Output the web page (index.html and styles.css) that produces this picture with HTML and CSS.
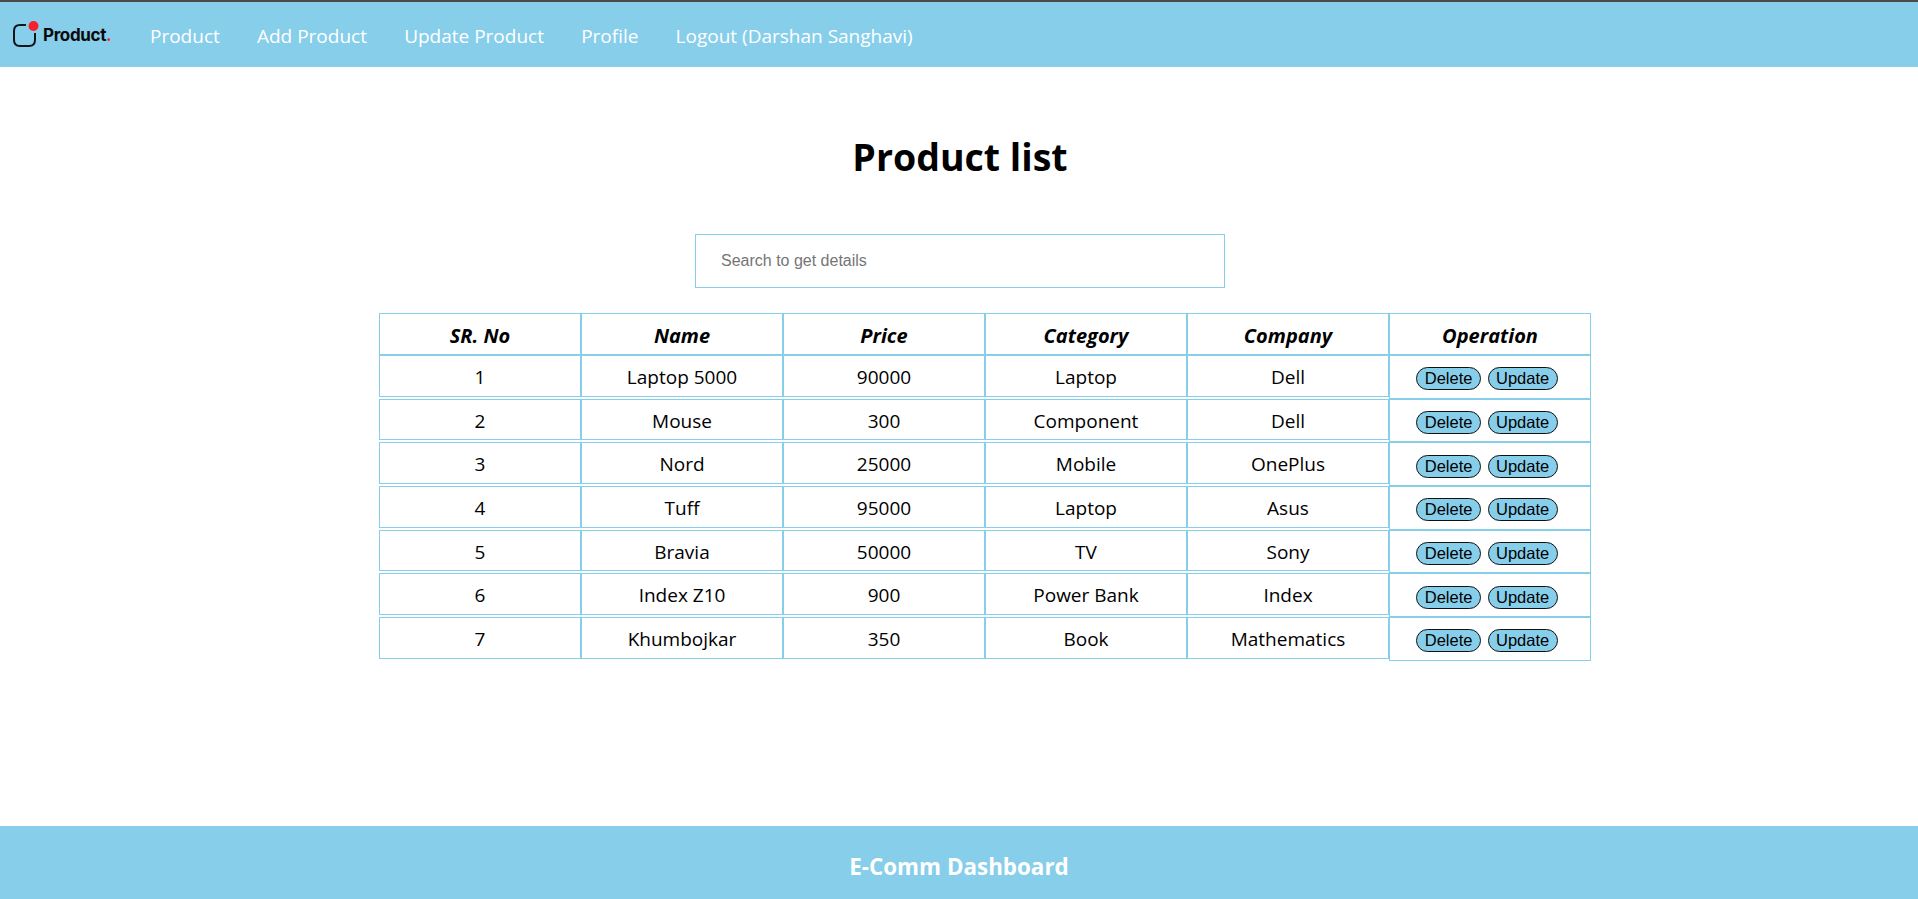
FILE: index.html
```html
<!doctype html>
<html>
	<head>
		<meta charset="utf-8">
		<title>E-Comm Dashboard</title>
		<link rel="stylesheet" href="styles.css">
	</head>
	<body>
		<nav class="navBar">
			<div class="logo">
				<svg class="logoIcon" width="32" height="34" viewBox="0 0 32 34">
					<path d="M15 7H9Q3 7 3 13V22Q3 28 9 28H18Q24 28 24 22V15" fill="none" stroke="#10151c" stroke-width="2"/>
					<circle cx="22.5" cy="8" r="5" fill="#f5222d"/>
				</svg>
				<span class="logoText">Product<span class="logoDot">.</span></span>
			</div>
			<ul class="navLinks">
				<li><a>Product</a></li>
				<li><a>Add Product</a></li>
				<li><a>Update Product</a></li>
				<li><a>Profile</a></li>
				<li><a>Logout (Darshan Sanghavi)</a></li>
			</ul>
		</nav>
		<main class="productList">
			<h1>Product list</h1>
			<input class="searchBox" type="text" placeholder="Search to get details">
			<ul class="row head">
				<li>SR. No</li><li>Name</li><li>Price</li><li>Category</li><li>Company</li><li>Operation</li>
			</ul>
			<ul class="row">
				<li>1</li><li>Laptop 5000</li><li>90000</li><li>Laptop</li><li>Dell</li>
				<li class="ops"><button>Delete</button><button>Update</button></li>
			</ul>
			<ul class="row">
				<li>2</li><li>Mouse</li><li>300</li><li>Component</li><li>Dell</li>
				<li class="ops"><button>Delete</button><button>Update</button></li>
			</ul>
			<ul class="row">
				<li>3</li><li>Nord</li><li>25000</li><li>Mobile</li><li>OnePlus</li>
				<li class="ops"><button>Delete</button><button>Update</button></li>
			</ul>
			<ul class="row">
				<li>4</li><li>Tuff</li><li>95000</li><li>Laptop</li><li>Asus</li>
				<li class="ops"><button>Delete</button><button>Update</button></li>
			</ul>
			<ul class="row">
				<li>5</li><li>Bravia</li><li>50000</li><li>TV</li><li>Sony</li>
				<li class="ops"><button>Delete</button><button>Update</button></li>
			</ul>
			<ul class="row">
				<li>6</li><li>Index Z10</li><li>900</li><li>Power Bank</li><li>Index</li>
				<li class="ops"><button>Delete</button><button>Update</button></li>
			</ul>
			<ul class="row">
				<li>7</li><li>Khumbojkar</li><li>350</li><li>Book</li><li>Mathematics</li>
				<li class="ops"><button>Delete</button><button>Update</button></li>
			</ul>
		</main>
		<footer class="footer">E-Comm Dashboard</footer>
	</body>
</html>
```

FILE: styles.css
```css
*{
	box-sizing: border-box;
}
body{
	margin: 0;
	height: 899px;
	overflow: hidden;
	display: flex;
	flex-direction: column;
	font-family: "Open Sans", sans-serif;
	color: black;
	background: white;
}

/**
 * navigation styles
 */
.navBar{
	display: flex;
	align-items: center;
	height: 67px;
	border-top: 2px solid #4a4a4a;
	background: #87ceeb;
}
.logo{
	display: flex;
	align-items: center;
	width: 125px;
	height: 65px;
	padding-left: 11px;
}
.logoIcon{
	flex: none;
}
.logoText{
	font-family: Inter, sans-serif;
	font-weight: 700;
	font-size: 17px;
	letter-spacing: -0.35px;
	color: #0a0a0a;
}
.logoDot{
	color: #f5222d;
}
.navLinks{
	display: flex;
	list-style: none;
	margin: 0;
	padding: 2px 0 0 25px;
	gap: 37.2px;
}
.navLinks a{
	font-size: 19px;
	color: white;
}

/**
 * product table
 */
.productList{
	flex: 1;
	display: flex;
	flex-direction: column;
	align-items: center;
	padding-left: 2px;
}
h1{
	margin: 63px 0 50px;
	font-size: 37.5px;
	line-height: 54px;
	font-weight: 700;
}
.searchBox{
	display: block;
	width: 530px;
	height: 54px;
	padding: 0 25px;
	margin-bottom: 25px;
	border: 1px solid #87ceeb;
	outline: none;
	font-family: "Liberation Sans", sans-serif;
	font-size: 16px;
}
.row{
	display: flex;
	align-items: flex-start;
	list-style: none;
	width: 1212px;
	height: 43.67px;
	margin: 0 0 0 50px;
	padding: 0;
}
.row li{
	width: 202px;
	height: 41.7px;
	padding-top: 3px;
	border: 1px solid #87ceeb;
	font-size: 19px;
	line-height: 37.7px;
	text-align: center;
}
.row li.ops{
	height: 43.67px;
	padding: 2px 6px 0 0;
	line-height: 39.67px;
}
.head{
	height: 42px;
}
.row.head li{
	height: 42px;
	padding-top: 4px;
	font-size: 20px;
	line-height: 36px;
	font-weight: 700;
	font-style: italic;
}
.ops button{
	height: 23px;
	padding: 0 7.5px;
	margin: 0 3.3px;
	border: 1px solid #111;
	border-radius: 12px;
	background: #87ceeb;
	font-family: "Liberation Sans", sans-serif;
	font-size: 16.5px;
	line-height: 21px;
	color: black;
	vertical-align: middle;
}

/**
 * footer styles
 */
.footer{
	height: 73px;
	padding-top: 6px;
	background: #87ceeb;
	color: white;
	font-size: 22.4px;
	font-weight: 700;
	line-height: 69px;
	text-align: center;
}
```
